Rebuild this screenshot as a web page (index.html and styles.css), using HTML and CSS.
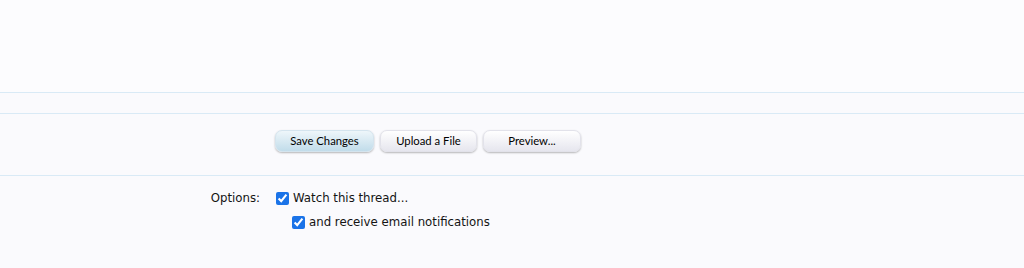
FILE: index.html
```html
<!DOCTYPE html>
<html>
<head>
<meta charset="utf-8">
<link rel="stylesheet" href="styles.css">
</head>
<body>
<div class="top"></div>
<div class="band"></div>
<div class="buttons-row">
  <div class="spacer"></div>
  <div class="buttons">
    <button class="btn primary">Save Changes</button>
    <button class="btn">Upload a File</button>
    <button class="btn">Preview...</button>
  </div>
</div>
<div class="options">
  <div class="label">Options:</div>
  <div class="opts">
    <label class="opt"><input type="checkbox" checked><span>Watch this thread...</span></label>
    <label class="opt sub"><input type="checkbox" checked><span>and receive email notifications</span></label>
  </div>
</div>
</body>
</html>
```
FILE: styles.css
```css
html, body { margin: 0; padding: 0; }
body {
  background: #fafafd;
  font-family: "DejaVu Sans", Verdana, sans-serif;
  color: #141414;
  width: 1024px;
  height: 268px;
  overflow: hidden;
}
.top {
  height: 92px;
  background: #fcfcfe;
  border-bottom: 1px solid #d9eaf6;
}
.band {
  height: 20px;
  border-bottom: 1px solid #d9eaf6;
}
.buttons-row {
  display: flex;
  height: 61px;
  border-bottom: 1px solid #d9eaf6;
}
.spacer { width: 275px; }
.buttons {
  display: flex;
  align-items: flex-start;
  gap: 6px;
  padding-top: 16px;
}
.btn {
  height: 22px;
  border: 1px solid #e2e2ea;
  border-radius: 7px;
  background: linear-gradient(#ffffff, #e6e6ee);
  box-shadow: 0 1px 2px rgba(0,0,0,0.28);
  font-family: Lato, "Open Sans", sans-serif;
  font-size: 11.3px;
  color: #000;
  padding: 0 0 1px;
  cursor: pointer;
}
.btn:nth-child(1) { width: 99px; }
.btn:nth-child(2) { width: 97px; }
.btn:nth-child(3) { width: 98px; }
.btn.primary {
  background: linear-gradient(#eef6fa, #c1dcea);
  border-color: #d4e4ee;
}
.options {
  display: flex;
  padding-top: 13px;
}
.label {
  width: 260px;
  text-align: right;
  font-size: 11.75px;
  line-height: 18px;
}
.opts {
  display: flex;
  flex-direction: column;
  padding-left: 16px;
  gap: 6px;
}
.opt {
  display: flex;
  align-items: center;
  font-size: 11.75px;
  line-height: 18px;
}
.opt input {
  margin: 0 4px 0 0;
  width: 13px;
  height: 13px;
  accent-color: #1a73e8;
}
.opt.sub { padding-left: 16px; }
```
